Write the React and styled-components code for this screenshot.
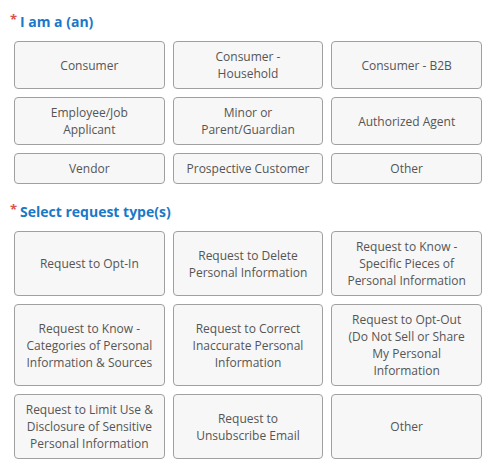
import React from 'react';
import styled, { createGlobalStyle } from 'styled-components';

const GlobalStyle = createGlobalStyle`
    body {
        margin:0;
        background:#fff;
        font-family:"Open Sans", "Liberation Sans", sans-serif;
    }
`

const whoOptions = [
    'Consumer',
    'Consumer - Household',
    'Consumer - B2B',
    'Employee/Job Applicant',
    'Minor or Parent/Guardian',
    'Authorized Agent',
    'Vendor',
    'Prospective Customer',
    'Other',
];

const requestOptions = [
    'Request to Opt-In',
    'Request to Delete Personal Information',
    'Request to Know - Specific Pieces of Personal Information',
    'Request to Know - Categories of Personal Information & Sources',
    'Request to Correct Inaccurate Personal Information',
    'Request to Opt-Out (Do Not Sell or Share My Personal Information',
    'Request to Limit Use & Disclosure of Sensitive Personal Information',
    'Request to Unsubscribe Email',
    'Other',
];

const App = () => {

    return(
        <FormContainer>
            <GlobalStyle />
            <Section>
                <SectionTitle><Required>*</Required>I am a (an)</SectionTitle>
                <OptionGrid>
                    {whoOptions.map((label) => (
                        <OptionButton key={label} type='button'>{label}</OptionButton>
                    ))}
                </OptionGrid>
            </Section>
            <Section>
                <SectionTitle><Required>*</Required>Select request type(s)</SectionTitle>
                <OptionGrid>
                    {requestOptions.map((label) => (
                        <OptionButton key={label} type='button'>{label}</OptionButton>
                    ))}
                </OptionGrid>
            </Section>
        </FormContainer>
    )
}

export default App;

const FormContainer = styled.div`
    width:468px;
    padding:12px 0 0 14px;
`

const Section = styled.div`
    & + & {
        margin-top:18px;
    }
`

const SectionTitle = styled.h2`
    position:relative;
    margin:0 0 9px 0;
    padding-left:6px;
    font-size:14px;
    line-height:20px;
    font-weight:700;
    color:#1a78c8;
`

const Required = styled.span`
    position:absolute;
    left:-4px;
    top:-3px;
    font-size:13px;
    color:#d9534f;
`

const OptionGrid = styled.div`
    display:grid;
    grid-template-columns:repeat(3, 1fr);
    gap:8px;
`

const OptionButton = styled.button`
    display:flex;
    align-items:center;
    justify-content:center;
    padding:6px 10px;
    background:#f7f7f7;
    border:1px solid #a0a0a0;
    border-radius:4px;
    font-family:"Open Sans", "Liberation Sans", sans-serif;
    font-size:12px;
    line-height:17px;
    color:#555;
    text-align:center;
    cursor:pointer;
`
